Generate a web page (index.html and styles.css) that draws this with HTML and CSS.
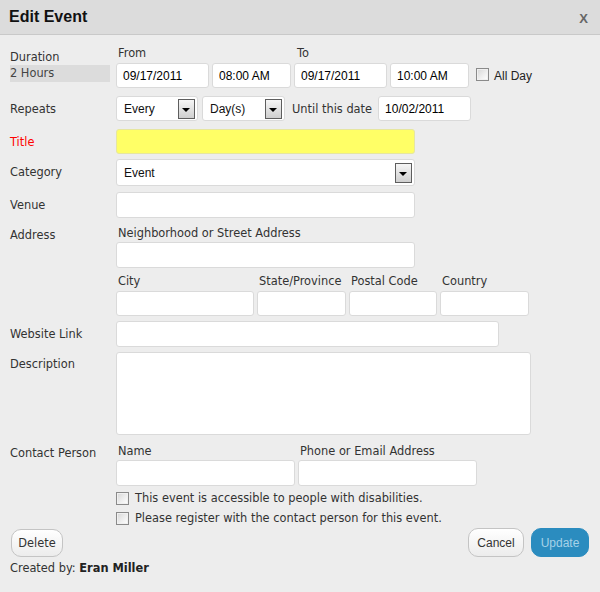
FILE: index.html
```html
<!DOCTYPE html>
<html>
<head>
<meta charset="utf-8">
<title>Edit Event</title>
<link rel="stylesheet" href="styles.css">
</head>
<body>
<div class="header">
  <span class="title">Edit Event</span>
  <span class="close">X</span>
</div>
<div class="form">
  <div class="row r-duration">
    <div class="lbl lbl-dur">
      <div>Duration</div>
      <div class="hours">2 Hours</div>
    </div>
    <div class="fields">
      <div class="dur-grid">
        <div class="cap">From</div><div></div><div class="cap">To</div><div></div>
        <input class="inp" type="text" value="09/17/2011">
        <input class="inp" type="text" value="08:00 AM">
        <input class="inp" type="text" value="09/17/2011">
        <input class="inp" type="text" value="10:00 AM">
      </div>
      <label class="allday"><span class="cb"></span><span>All Day</span></label>
    </div>
  </div>

  <div class="row r-repeats">
    <div class="lbl pad6">Repeats</div>
    <div class="fields">
      <div class="select s-every"><span>Every</span><span class="arrow"></span></div>
      <div class="select s-days"><span>Day(s)</span><span class="arrow"></span></div>
      <span class="until">Until this date</span>
      <input class="inp w93" type="text" value="10/02/2011">
    </div>
  </div>

  <div class="row r-title">
    <div class="lbl pad6 red">Title</div>
    <input class="inp w299 yellow" type="text" value="">
  </div>

  <div class="row r-category">
    <div class="lbl pad6">Category</div>
    <div class="select w299 tall"><span>Event</span><span class="arrow"></span></div>
  </div>

  <div class="row r-venue">
    <div class="lbl pad6">Venue</div>
    <input class="inp w299 h26" type="text" value="">
  </div>

  <div class="row r-address">
    <div class="lbl pad2">Address</div>
    <div class="stack">
      <div class="cap">Neighborhood or Street Address</div>
      <input class="inp w299 h26 mt2" type="text" value="">
      <div class="addr-grid">
        <div class="cap">City</div>
        <div class="cap">State/Province</div>
        <div class="cap">Postal Code</div>
        <div class="cap">Country</div>
        <input class="inp" type="text" value="">
        <input class="inp" type="text" value="">
        <input class="inp" type="text" value="">
        <input class="inp" type="text" value="">
      </div>
    </div>
  </div>

  <div class="row r-web">
    <div class="lbl pad6">Website Link</div>
    <input class="inp w383 h26" type="text" value="">
  </div>

  <div class="row r-desc">
    <div class="lbl pad5">Description</div>
    <textarea class="inp area"></textarea>
  </div>

  <div class="row r-contact">
    <div class="lbl pad2">Contact Person</div>
    <div class="contact-grid">
      <div class="cap">Name</div>
      <div class="cap">Phone or Email Address</div>
      <input class="inp h26" type="text" value="">
      <input class="inp h26" type="text" value="">
    </div>
  </div>

  <div class="row r-check1">
    <div class="lbl"></div>
    <label class="check"><span class="cb"></span><span>This event is accessible to people with disabilities.</span></label>
  </div>
  <div class="row r-check2">
    <div class="lbl"></div>
    <label class="check"><span class="cb"></span><span>Please register with the contact person for this event.</span></label>
  </div>

  <div class="buttons">
    <button class="btn btn-delete" type="button">Delete</button>
    <div class="right-btns">
      <button class="btn btn-cancel" type="button">Cancel</button>
      <button class="btn btn-update" type="button">Update</button>
    </div>
  </div>

  <div class="created">Created by: <b>Eran Miller</b></div>
</div>
</body>
</html>
```

FILE: styles.css
```css
html, body {
  margin: 0;
  padding: 0;
}
body {
  width: 600px;
  height: 592px;
  overflow: hidden;
  background: #ededed;
  font-family: "DejaVu Sans", "Liberation Sans", sans-serif;
  font-size: 11.4px;
  color: #333;
}

.header {
  height: 34px;
  background: #dcdcdc;
  border-bottom: 1px solid #c9c9c9;
  display: flex;
  align-items: center;
  justify-content: space-between;
  padding: 0 12px 0 9px;
}
.title {
  font: bold 16px "Liberation Sans", sans-serif;
  color: #111;
  margin-top: -1px;
}
.close {
  font: bold 13px "Liberation Sans", sans-serif;
  color: #666;
  margin-top: 2px;
}

.form {
  padding-left: 10px;
}
.row {
  display: flex;
  align-items: flex-start;
}
.lbl {
  width: 106px;
  flex: none;
  line-height: 14px;
  color: #333;
}
.pad2 { padding-top: 2px; }
.pad5 { padding-top: 5px; }
.pad6 { padding-top: 6px; }
.pad7 { padding-top: 7px; }
.red { color: #f00; }

.cap {
  line-height: 14px;
  padding-left: 2px;
  white-space: nowrap;
  color: #333;
}

.inp {
  box-sizing: border-box;
  display: block;
  height: 25px;
  margin: 0;
  border: 1px solid #dadada;
  border-radius: 3px;
  background: #fff;
  padding: 0 6px;
  font: 12px "Liberation Sans", sans-serif;
  color: #000;
  outline: none;
}
.h26 { height: 26px; }
.w93 { width: 93px; }
.w299 { width: 299px; }
.w383 { width: 383px; }
.yellow { background: #ffff66; border-color: #e6e6a0; }
.mt2 { margin-top: 2px; }

/* Duration */
.r-duration { margin-top: 12px; }
.r-duration .fields { margin-top: -1px; }
.lbl-dur { padding-top: 3px; }
.hours {
  margin-top: 1px;
  width: 100px;
  height: 17px;
  line-height: 17px;
  background: #dcdcdc;
  color: #444;
}
.fields {
  display: flex;
  align-items: flex-end;
}
.dur-grid {
  display: grid;
  grid-template-columns: 93px 79px 93px 79px;
  column-gap: 3px;
  row-gap: 3px;
}
.dur-grid .cap:nth-child(3) { padding-left: 3px; }
.allday {
  display: flex;
  align-items: center;
  margin-left: 7px;
  height: 25px;
  font: 12px "Liberation Sans", sans-serif;
  color: #222;
}
.allday .cb { margin-right: 5px; margin-top: -2px; }

.cb {
  box-sizing: border-box;
  display: inline-block;
  width: 13px;
  height: 13px;
  border: 1px solid #8a8a8a;
  background: linear-gradient(135deg, #d6d6d6 0%, #f4f4f4 70%, #fff 100%);
  box-shadow: inset 0 0 0 1px #f0f0f0;
  flex: none;
}

/* Repeats */
.r-repeats { margin-top: 8px; }
.r-repeats .fields { align-items: center; }
.select {
  box-sizing: border-box;
  height: 25px;
  border: 1px solid #dadada;
  border-radius: 3px;
  background: #fff;
  display: flex;
  align-items: center;
  justify-content: space-between;
  padding: 0 2px 0 7px;
  font: 12px "Liberation Sans", sans-serif;
  color: #111;
}
.s-every { width: 82px; margin-right: 4px; }
.s-days { width: 83px; margin-right: 7px; }
.tall { height: 27px; }
.arrow {
  box-sizing: border-box;
  width: 17px;
  height: 20px;
  border: 1px solid #5e5e5e;
  background: linear-gradient(#f6f6f6, #cfcfcf);
  position: relative;
  flex: none;
}
.arrow::after {
  content: "";
  position: absolute;
  left: 3px;
  top: 8px;
  border-left: 4px solid transparent;
  border-right: 4px solid transparent;
  border-top: 4px solid #000;
}
.until {
  margin-right: 6px;
  white-space: nowrap;
}

.r-title { margin-top: 8px; }
.r-category { margin-top: 5px; }
.r-venue { margin-top: 6px; }

/* Address */
.r-address { margin-top: 8px; }
.addr-grid {
  margin-top: 6px;
  display: grid;
  grid-template-columns: 138px 89px 88px 89px;
  column-gap: 3px;
  row-gap: 3px;
}

.r-web { margin-top: 5px; }
.r-desc { margin-top: 5px; }
.area {
  width: 415px;
  height: 83px;
  resize: none;
}

/* Contact */
.r-contact { margin-top: 9px; }
.contact-grid {
  display: grid;
  grid-template-columns: 179px 179px;
  column-gap: 3px;
  row-gap: 2px;
}

.check {
  display: flex;
  align-items: center;
  height: 14px;
  line-height: 14px;
  color: #333;
  white-space: nowrap;
}
.check .cb { margin-right: 6px; }
.r-check1 { margin-top: 5px; }
.r-check2 { margin-top: 6px; }

/* Buttons */
.buttons {
  margin-top: 3px;
  display: flex;
  justify-content: space-between;
  align-items: center;
  padding: 0 11px 0 1px;
}
.right-btns {
  display: flex;
  gap: 7px;
}
.btn {
  box-sizing: border-box;
  height: 29px;
  border-radius: 10px;
  padding: 0;
  margin: 0;
  font: 12px "Liberation Sans", sans-serif;
  cursor: pointer;
}
.btn-delete {
  width: 52px;
  border: 1px solid #c4c4c4;
  background: linear-gradient(#ffffff, #ececec);
  color: #333;
  font-family: "DejaVu Sans", sans-serif;
  font-size: 11.4px;
  height: 28px;
}
.btn-cancel {
  width: 56px;
  border: 1px solid #c4c4c4;
  background: linear-gradient(#ffffff, #ececec);
  color: #333;
}
.btn-update {
  width: 58px;
  border: 1px solid #2b8cbf;
  background: #2b8cbf;
  color: #a6d2e8;
}

.created {
  margin-top: 4px;
  line-height: 14px;
  color: #333;
}
.created b { color: #222; }
```
